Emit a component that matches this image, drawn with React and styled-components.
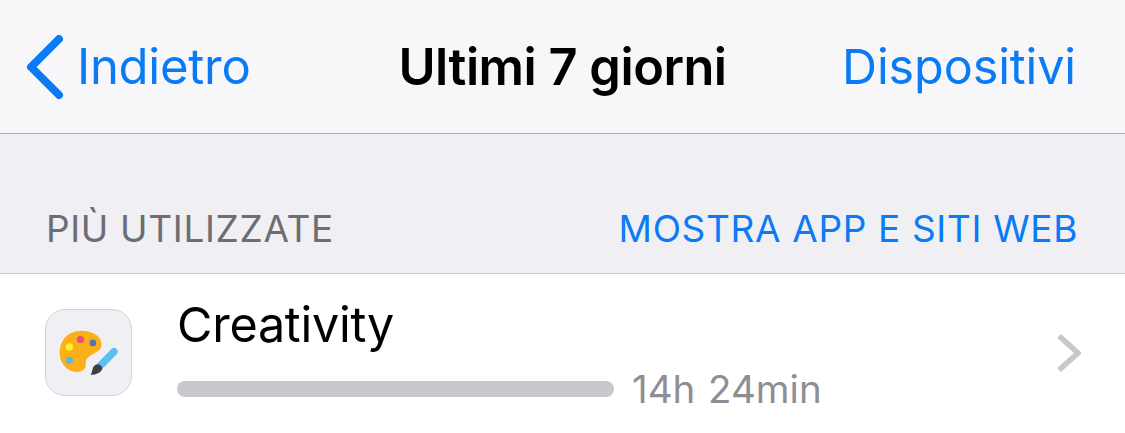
import React from "react";
import styled, { createGlobalStyle } from "styled-components";

const GlobalStyle = createGlobalStyle`
  html, body {
    margin: 0;
    padding: 0;
    background: #fff;
    overflow: hidden;
  }
  body {
    font-family: Inter, "Liberation Sans", sans-serif;
  }
`;

const Page = styled.div`
  width: 1125px;
  height: 433px;
  display: flex;
  flex-direction: column;
  overflow: hidden;
`;

const NavBar = styled.header`
  height: 134px;
  box-sizing: border-box;
  flex: none;
  display: grid;
  grid-template-columns: 1fr auto 1fr;
  align-items: center;
  padding: 0 49px;
  background: #f7f7f9;
  border-bottom: 1px solid #b2b2b4;
`;

const BackLink = styled.div`
  display: flex;
  align-items: center;
  gap: 13px;
  margin-left: -23px;
  color: #0a7bf5;
  font-size: 49px;
  letter-spacing: -0.25px;
`;

const NavTitle = styled.div`
  color: #000;
  font-size: 50.5px;
  font-weight: 600;
  letter-spacing: -0.5px;
`;

const NavAction = styled.div`
  justify-self: end;
  color: #0a7bf5;
  font-size: 48.5px;
  letter-spacing: -0.1px;
`;

const SectionHeader = styled.div`
  height: 140px;
  box-sizing: border-box;
  flex: none;
  display: flex;
  align-items: flex-end;
  justify-content: space-between;
  padding: 0 47px 24px 46px;
  background: #efeff4;
  border-bottom: 1px solid #c8c8cc;
  font-size: 37px;
  line-height: 40px;
  letter-spacing: 0.65px;
`;

const SectionTitle = styled.span`
  color: #6d6d72;
`;

const SectionLink = styled.span`
  color: #0a7bf5;
`;

const Row = styled.div`
  flex: 1;
  display: flex;
  align-items: flex-start;
  padding: 35px 44px 0 45px;
  background: #fff;
`;

const AppIcon = styled.div`
  width: 87px;
  height: 87px;
  box-sizing: border-box;
  flex: none;
  display: flex;
  align-items: center;
  justify-content: center;
  background: #efeff4;
  border: 1px solid #d4d4d8;
  border-radius: 20px;
`;

const RowBody = styled.div`
  flex: 1;
  margin-left: 45px;
  display: flex;
  flex-direction: column;
  margin-top: -14px;
`;

const RowTitle = styled.div`
  color: #000;
  font-size: 48.5px;
  line-height: 60px;
  letter-spacing: -0.25px;
`;

const UsageLine = styled.div`
  display: flex;
  align-items: center;
  gap: 18px;
  margin-top: 12px;
`;

const UsageBar = styled.div`
  width: 437px;
  height: 16px;
  border-radius: 8px;
  background: #c7c7cc;
`;

const UsageTime = styled.span`
  color: #8e8e93;
  font-size: 38.5px;
  line-height: 44px;
  word-spacing: 2px;
`;

const Chevron = styled.svg`
  flex: none;
  margin-top: 25px;
`;

function PaletteIcon() {
  return (
    <svg width="62" height="48" viewBox="85 100 185 142">
      <path
        d="M150 105C185 103 215 120 215 145C215 170 185 170 170 190C165 200 175 215 155 225C130 235 90 215 90 170C90 130 115 107 150 105Z"
        fill="#fbb01a"
      />
      <circle cx="152" cy="131" r="11" fill="#ea4f71" />
      <circle cx="189" cy="141" r="10" fill="#5f71ad" />
      <circle cx="119" cy="153" r="11" fill="#fdf02a" />
      <circle cx="119" cy="193" r="11" fill="#5bb9d3" />
      <path d="M212 208L252 167" stroke="#5ac0ee" strokeWidth="22" strokeLinecap="round" />
      <path d="M182 236C190 225 185 210 200 205C212 203 220 215 216 222C208 233 195 237 182 236Z" fill="#3f3f42" />
    </svg>
  );
}

export default function App() {
  return (
    <>
      <GlobalStyle />
      <Page>
        <NavBar>
          <BackLink>
            <svg width="38" height="64" viewBox="0 0 38 64">
              <path
                d="M33 4L5 32L33 60"
                fill="none"
                stroke="#0a7bf5"
                strokeWidth="8"
                strokeLinecap="round"
                strokeLinejoin="round"
              />
            </svg>
            Indietro
          </BackLink>
          <NavTitle>Ultimi 7 giorni</NavTitle>
          <NavAction>Dispositivi</NavAction>
        </NavBar>
        <SectionHeader>
          <SectionTitle>PIÙ UTILIZZATE</SectionTitle>
          <SectionLink>MOSTRA APP E SITI WEB</SectionLink>
        </SectionHeader>
        <Row>
          <AppIcon>
            <PaletteIcon />
          </AppIcon>
          <RowBody>
            <RowTitle>Creativity</RowTitle>
            <UsageLine>
              <UsageBar />
              <UsageTime>14h 24min</UsageTime>
            </UsageLine>
          </RowBody>
          <Chevron width="24" height="38" viewBox="0 0 24 38">
            <path d="M2 2L21 19L2 36" fill="none" stroke="#c7c7cc" strokeWidth="5.5" />
          </Chevron>
        </Row>
      </Page>
    </>
  );
}
